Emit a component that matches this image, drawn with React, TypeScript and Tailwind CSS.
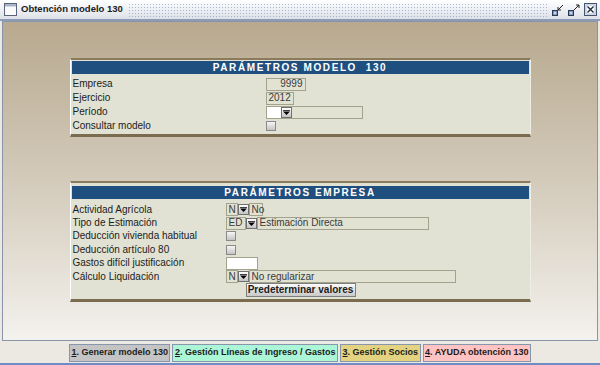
import type { ReactNode } from "react";

const FONT = "font-['Liberation_Sans',Arial,sans-serif]";

function ComboArrow() {
  return (
    <span className="flex h-[11px] w-[11px] shrink-0 items-center justify-center border border-[#707070] bg-linear-to-b from-white to-[#c2c2c2]">
      <svg width="7" height="5" viewBox="0 0 7 5">
        <rect x="0" y="0" width="7" height="1" fill="#404040" />
        <path d="M0 1.5 H7 L3.5 5 Z" fill="#000" />
      </svg>
    </span>
  );
}

function Check() {
  return (
    <span className="block h-[10px] w-[10px] border border-[#8a8a8a] bg-linear-to-b from-[#f7f7f7] to-[#c4c4c4]" />
  );
}

function Field({ className, children }: { className: string; children?: ReactNode }) {
  return (
    <span
      className={`flex h-[13px] items-center border border-[#a3a28c] bg-[#e2e2d3] px-[2px] text-[10px] leading-none text-[#3a3a3a] ${className}`}
    >
      {children}
    </span>
  );
}

function Row({ label, w, h, children }: { label: string; w: string; h: string; children?: ReactNode }) {
  return (
    <div className={`flex ${h} items-center`}>
      <span className={`${w} shrink-0 text-[10px] leading-none text-[#1c1c1c]`}>{label}</span>
      <div className="flex items-center">{children}</div>
    </div>
  );
}

function Panel({ title, pad, children }: { title: string; pad: string; children: ReactNode }) {
  return (
    <section className={`mx-auto w-[461px] border-t-2 border-b-[3px] border-l border-r border-t-[#8b7a5c] border-b-[#7b6c50] border-l-white border-r-[#eeeee4] bg-[#e1e2d3] px-[1px] ${pad}`}>
      <h2 className="flex h-[13px] items-center justify-center bg-[#1f4f7f] text-[10px] font-bold leading-none tracking-[1.6px] whitespace-pre text-white">
        {title}
      </h2>
      {children}
    </section>
  );
}

function WinIcon({ kind }: { kind: "restore" | "max" | "close" }) {
  if (kind === "close")
    return (
      <svg width="13" height="13" viewBox="0 0 13 13">
        <rect x="0.5" y="0.5" width="12" height="12" fill="#e8ecf4" stroke="#44546e" />
        <rect x="2" y="2" width="9" height="9" fill="#fff" stroke="#8494b0" strokeWidth="0.6" />
        <path d="M3.5 3.5 L9.5 9.5 M9.5 3.5 L3.5 9.5" stroke="#1e2a3e" strokeWidth="1.4" />
      </svg>
    );
  return (
    <svg width="12" height="12" viewBox="0 0 12 12">
      <rect x="0.5" y="6.5" width="5" height="5" fill="#6f86b4" stroke="#2a3a58" />
      <rect x="1.7" y="7.7" width="2.6" height="2.6" fill="#c9d4ea" />
      {kind === "restore" ? (
        <path d="M11 1 L6 6 M6 3 V6 H9" stroke="#222" strokeWidth="1" fill="none" />
      ) : (
        <path d="M6 6 L11 1 M8 1 H11 V4" stroke="#222" strokeWidth="1" fill="none" />
      )}
    </svg>
  );
}

function TabButton({ n, label, color }: { n: string; label: string; color: string }) {
  return (
    <button
      className={`h-[18px] border border-[#8796ad] px-[1.5px] text-[9px] font-bold leading-none text-[#1c1c1c] ${color}`}
    >
      <span className="underline">{n}</span>. {label}
    </button>
  );
}

export default function App() {
  return (
    <div className={`flex h-[365px] w-[600px] flex-col bg-[#ece9e2] ${FONT}`}>
      {/* title bar */}
      <header className="flex h-[21px] shrink-0 items-center border-b-2 border-b-[#8e9bb4] bg-linear-to-b from-white to-[#dde1e8] pl-[4px] pr-[3px]">
        <svg width="13" height="13" viewBox="0 0 13 13" className="mr-[4px] shrink-0">
          <rect x="0.5" y="0.5" width="12" height="12" fill="#fafafa" stroke="#5a6478" />
          <rect x="1" y="1" width="11" height="2.5" fill="#aab4c8" />
        </svg>
        <span className="text-[9.5px] font-bold whitespace-nowrap text-[#1b1b1b]">Obtención modelo 130</span>
        <div className="mx-[5px] h-[14px] flex-1 bg-[radial-gradient(#93a6c8_0.75px,transparent_0.9px)] bg-[length:3px_3px] opacity-80" />
        <div className="flex items-center gap-[4px]">
          <WinIcon kind="restore" />
          <WinIcon kind="max" />
          <WinIcon kind="close" />
        </div>
      </header>

      {/* content */}
      <main className="mx-[2px] flex-1 border border-[#8794aa] bg-linear-to-b from-[#b8a98f] via-[#d6cebf] via-55% to-[#f4f2ee] pt-[36px]">
        <Panel title={"PARÁMETROS MODELO  130"} pad="pt-[1px] pb-[1px]">
          <div className="pl-[1px] pt-[3px]">
            <Row label="Empresa" w="w-[193px]" h="h-[14px]">
              <Field className="w-[40px] justify-end">9999</Field>
            </Row>
            <Row label="Ejercicio" w="w-[193px]" h="h-[14px]">
              <Field className="w-[28px]">2012</Field>
            </Row>
            <Row label="Período" w="w-[193px]" h="h-[14px]">
              <span className="flex h-[13px] w-[97px] items-center border border-[#a3a28c] bg-[#e2e2d3]">
                <span className="h-full w-[14px] bg-white" />
                <ComboArrow />
              </span>
            </Row>
            <Row label="Consultar modelo" w="w-[193px]" h="h-[14px]">
              <Check />
            </Row>
          </div>
        </Panel>

        <div className="h-[44px]" />

        <Panel title="PARÁMETROS EMPRESA" pad="pt-[3px] pb-[2px]">
          <div className="pl-[1px] pt-[4px]">
            <Row label="Actividad Agrícola" w="w-[153px]" h="h-[13.4px]">
              <Field className="w-[12px]">N</Field>
              <ComboArrow />
              <Field className="w-[14px]">No</Field>
            </Row>
            <Row label="Tipo de Estimación" w="w-[153px]" h="h-[13.4px]">
              <Field className="w-[20px]">ED</Field>
              <ComboArrow />
              <Field className="w-[172px]">Estimación Directa</Field>
            </Row>
            <Row label="Deducción vivienda habitual" w="w-[153px]" h="h-[13.4px]">
              <Check />
            </Row>
            <Row label="Deducción artículo 80" w="w-[153px]" h="h-[13.4px]">
              <Check />
            </Row>
            <Row label="Gastos difícil justificación" w="w-[153px]" h="h-[13.4px]">
              <span className="block h-[13px] w-[32px] border border-[#a3a28c] bg-white" />
            </Row>
            <Row label="Cálculo Liquidación" w="w-[153px]" h="h-[13.4px]">
              <Field className="w-[12px]">N</Field>
              <ComboArrow />
              <Field className="w-[207px]">No regularizar</Field>
            </Row>
            <div className="flex h-[14px] items-center pl-[173px]">
              <button className="h-[14px] w-[110px] border border-[#7e7e7e] bg-linear-to-b from-[#fbfbfb] to-[#c9c9c9] text-[10px] font-bold leading-none text-[#1c1c1c]">
                Predeterminar valores
              </button>
            </div>
          </div>
        </Panel>
      </main>

      {/* bottom tabs */}
      <footer className="flex h-[24px] shrink-0 items-center justify-center gap-[2px] border-b-2 border-b-[#6f8cc4] pt-[1px]">
        <TabButton n="1" label="Generar modelo 130" color="bg-[#c4c4c4]" />
        <TabButton n="2" label="Gestión Líneas de Ingreso / Gastos" color="bg-[#aaf6d6]" />
        <TabButton n="3" label="Gestión Socios" color="bg-[#e3d27f]" />
        <TabButton n="4" label="AYUDA obtención 130" color="bg-[#ffc3c3]" />
      </footer>
    </div>
  );
}
